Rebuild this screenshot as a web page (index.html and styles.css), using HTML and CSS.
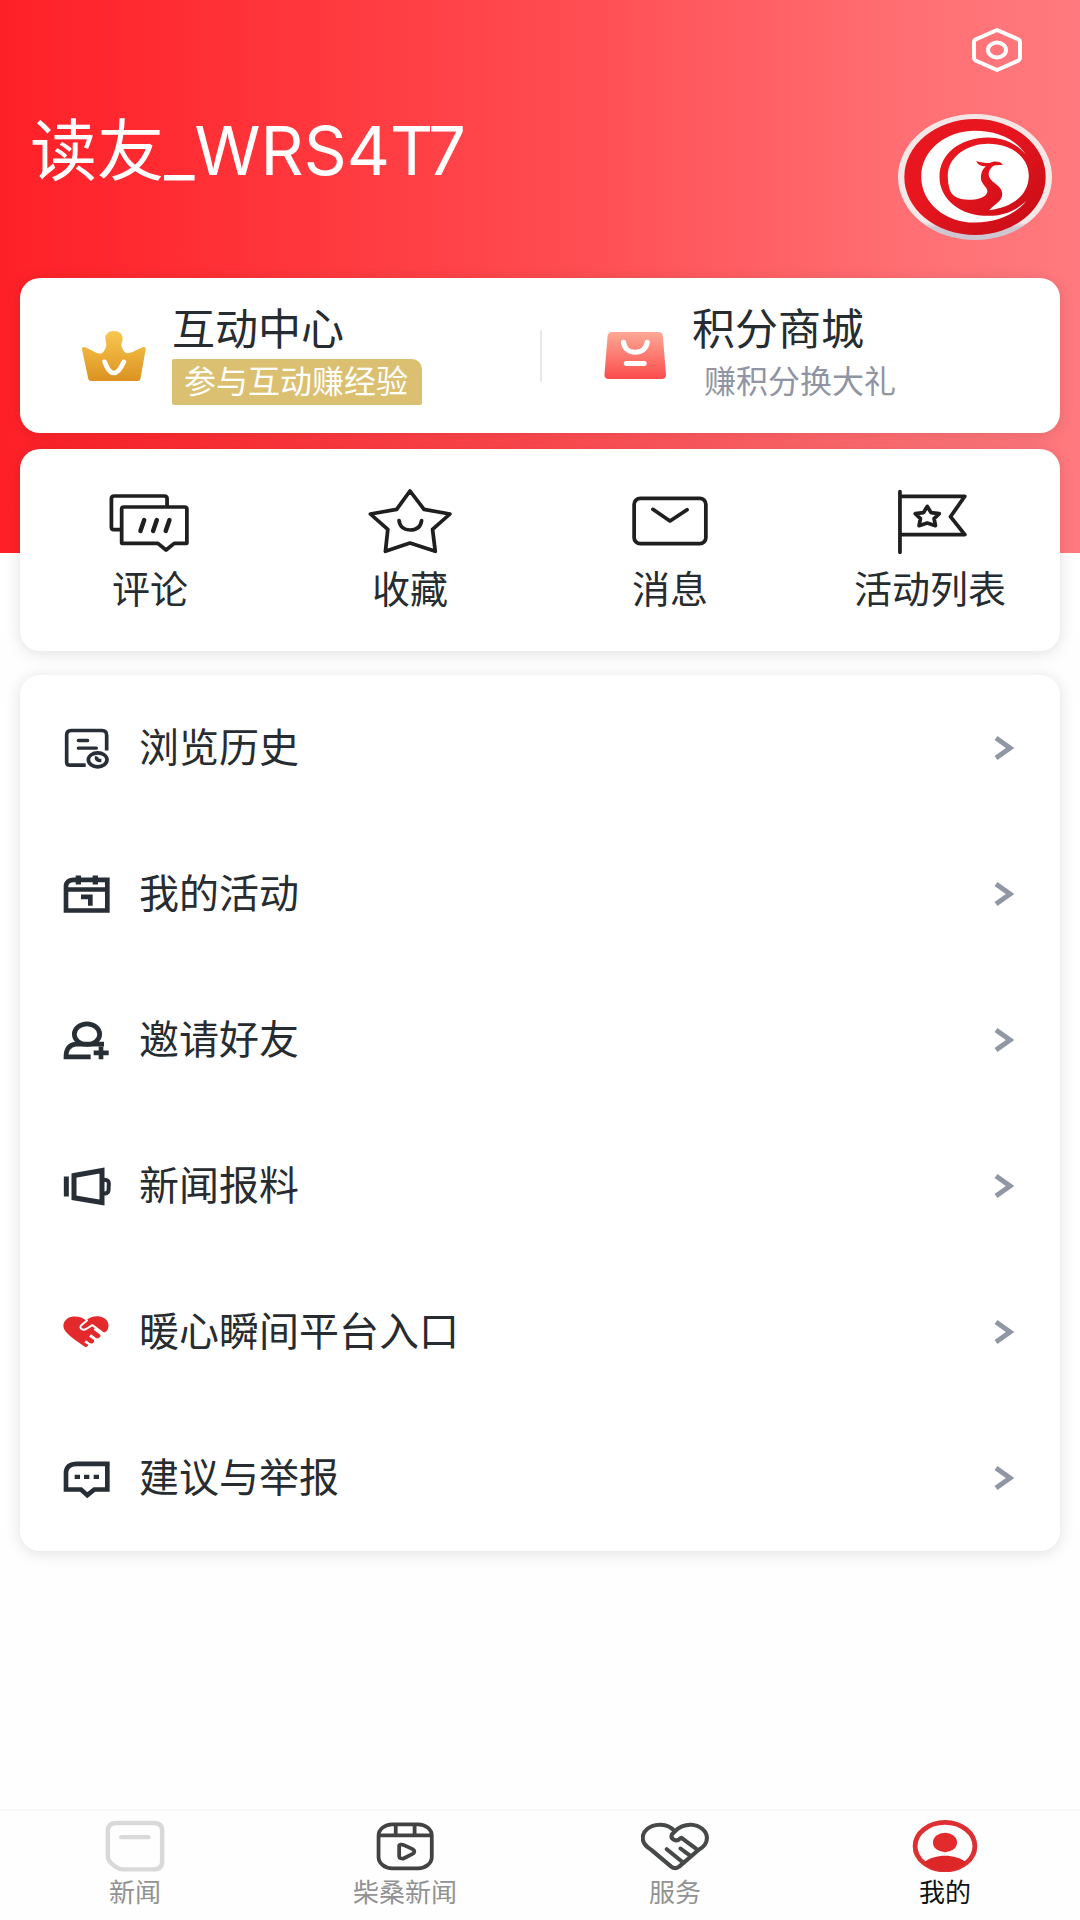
FILE: index.html
```html
<!DOCTYPE html>
<html lang="zh-CN">
<head>
<meta charset="utf-8">
<meta name="viewport" content="width=device-width, initial-scale=1">
<title>我的</title>
<link rel="stylesheet" href="styles.css">
</head>
<body>
<main class="page">
  <header class="top">
    <button class="settings" type="button" aria-label="设置">
      <svg viewBox="0 0 50 44" width="50" height="44" fill="none" stroke="#fff" stroke-width="4" stroke-linejoin="round"><path d="M25 2 46.500 11.500Q48 12.500 48 14V30Q48 31.500 46.500 32.500L25 42 3.500 32.500Q2 31.500 2 30V14Q2 12.500 3.500 11.500Z" /><ellipse cx="25" cy="22" rx="9" ry="7.500"/></svg>
    </button>
    <div class="profile">
      <h1 class="name">读友_WRS4T7</h1>
      <svg class="avatar" viewBox="113 341 464 376" preserveAspectRatio="none" role="img" aria-label="头像">
        <defs>
          <linearGradient id="rim" x1="0" y1="0" x2="0" y2="1"><stop offset="0" stop-color="#f4e6e4"/><stop offset=".86" stop-color="#f3e9e9"/><stop offset=".9" stop-color="#cfc6d2"/><stop offset="1" stop-color="#cdc5d0"/></linearGradient>
          <linearGradient id="disc" x1="0" y1="0" x2="1" y2="1"><stop offset=".4" stop-color="#e8161f"/><stop offset="1" stop-color="#c40c16"/></linearGradient>
        </defs>
        <ellipse cx="345" cy="529" rx="232" ry="188" fill="url(#rim)"/>
        <ellipse cx="345" cy="529" rx="213" ry="173" fill="url(#disc)"/>
        <path fill="#fff" d="M497 460C465 415 410 391 345 391C255 391 183 450 183 528C183 606 255 665 345 665C410 665 468 640 500 600C468 630 430 645 385 645C300 645 238 595 238 528C238 460 300 411 385 411C430 411 470 430 497 460Z"/>
        <path fill="#fff" d="M385 430C455 430 507 470 507 525C507 580 460 620 388 628C404 610 427 602 427 580C427 555 398 550 388 530C383 515 388 506 400 496C410 492 425 495 429 491C415 480 400 482 390 487C375 487 360 485 349 481C352 492 362 496 378 497C364 508 361 525 364 540C370 555 385 562 382 575C375 592 350 597 325 597C300 597 285 590 276 580C266 565 263 545 263 525C263 470 320 430 385 430Z"/>
      </svg>
    </div>
  </header>

  <section class="card promos">
    <a class="promo" href="#">
      <svg class="promo-icon" viewBox="238 206 184 151" preserveAspectRatio="none">
        <defs><linearGradient id="gold" x1="0" y1="0" x2="0" y2="1"><stop offset="0" stop-color="#f8c850"/><stop offset="1" stop-color="#dc9220"/></linearGradient></defs>
        <path fill="url(#gold)" d="M330 206C346 206 355 216 355 228C355 236 352 241 351 247C352 258 359 272 367 273C380 274 396 262 412 255Q422 252 421 262L406 350Q405 357 398 357H264Q257 357 256 350L238 262Q237 252 248 255C264 262 282 276 293 274C302 271 307 256 308 247C308 241 305 236 305 228C305 216 314 206 330 206Z"/>
        <path d="M303 299Q315 333 329 333Q344 333 358 299" fill="none" stroke="#fff" stroke-width="14" stroke-linecap="round"/>
      </svg>
      <span class="promo-text"><span class="promo-title">互动中心</span><span class="promo-sub badge">参与互动赚经验</span></span>
    </a>
    <a class="promo" href="#">
      <svg class="promo-icon" viewBox="182 210 184 151" preserveAspectRatio="none">
        <defs><linearGradient id="coral" x1="0" y1="0" x2="0" y2="1"><stop offset="0" stop-color="#fca995"/><stop offset="1" stop-color="#fc4b4c"/></linearGradient></defs>
        <path fill="url(#coral)" d="M212 213H343Q356 213 357 226L366 342Q366 355 353 355H202Q189 355 189 342L198 226Q199 213 212 213Z"/>
        <path d="M244 244C246 264 260 274 277 274C295 274 309 264 312 244M252 308H303" fill="none" stroke="#fff" stroke-width="15" stroke-linecap="round"/>
      </svg>
      <span class="promo-text"><span class="promo-title">积分商城</span><span class="promo-sub">赚积分换大礼</span></span>
    </a>
  </section>

  <nav class="card shortcuts" aria-label="快捷入口">
    <a class="shortcut" href="#">
      <svg class="shortcut-icon" viewBox="313 148 246 195" preserveAspectRatio="none"><path d="M353 270H330Q323 270 323 263V177Q323 169 331 169H478Q486 169 486 177V202M359 202H537Q544 202 544 208V311H507L483 331 459 311H353V208Q353 202 359 202Z"/><path d="M419 241 408 274M456 241 445 274M493 241 482 274" stroke-width="13"/></svg>
      <span>评论</span>
    </a>
    <a class="shortcut" href="#">
      <svg class="shortcut-icon" viewBox="1067 148 246 195" preserveAspectRatio="none"><path d="M1190 154 1231 209 1307 223 1256 269 1264 335 1190 310 1118 335 1125 269 1074 223 1151 209Z"/><path d="M1158 243C1160 262 1173 271 1190 271C1208 271 1221 262 1224 243"/></svg>
      <span>收藏</span>
    </a>
    <a class="shortcut" href="#">
      <svg class="shortcut-icon" viewBox="255 148 246 195" preserveAspectRatio="none"><rect x="273" y="176" width="210" height="136" rx="18"/><path d="M328 209 378 244 428 210"/></svg>
      <span>消息</span>
    </a>
    <a class="shortcut" href="#">
      <svg class="shortcut-icon" viewBox="1010 148 246 195" preserveAspectRatio="none"><path d="M1045 156V338M1045 170H1235L1193 231 1235 285H1045"/><path d="M1125 200 1136 219 1160 222 1145 237 1149 258 1125 250 1101 258 1105 237 1090 222 1114 219Z"/></svg>
      <span>活动列表</span>
    </a>
  </nav>

  <ul class="card menu">
    <li><a class="row" href="#">
      <svg class="row-icon" viewBox="72 84 144 128" fill="none" stroke="#272e35" stroke-width="11"><path d="M140 198H93Q83 198 83 189V107Q83 94 97 94H189Q203 94 203 108V154"/><path d="M118 124H146M118 147H172" stroke-width="10" stroke-linecap="round"/><ellipse cx="176" cy="182" rx="28" ry="21"/><path d="M173 172C171 180 174 184 187 184" stroke-width="11"/></svg>
      <span class="row-label">浏览历史</span>
      <svg class="chevron" viewBox="0 0 20 26"><path d="M2 3 16 13 2 23"/></svg></a></li>
    <li><a class="row" href="#">
      <svg class="row-icon" viewBox="70 521 144 128" fill="none" stroke="#272e35" stroke-width="14"><path d="M79 633V558Q82 541 102 541H203V633ZM79 570H203" /><path d="M116 528V555M167 528V555" stroke-width="16"/><path d="M124 592H152V619" stroke-width="14"/></svg>
      <span class="row-label">我的活动</span>
      <svg class="chevron" viewBox="0 0 20 26"><path d="M2 3 16 13 2 23"/></svg></a></li>
    <li><a class="row" href="#">
      <svg class="row-icon" viewBox="70 957 144 128" fill="none" stroke="#272e35" stroke-width="14"><ellipse cx="142" cy="1002" rx="38" ry="31"/><path d="M193 1032H108Q79 1036 79 1070H153M162 1058H207M184 1040V1077"/></svg>
      <span class="row-label">邀请好友</span>
      <svg class="chevron" viewBox="0 0 20 26"><path d="M2 3 16 13 2 23"/></svg></a></li>
    <li><a class="row" href="#">
      <svg class="row-icon" viewBox="70 74 144 128" fill="none" stroke="#272e35" stroke-width="15"><path d="M80 108V168M103 105 187 90V186L103 172Z"/><path d="M192 118C212 118 207 130 207 140C207 151 208 159 192 159" stroke-width="12"/></svg>
      <span class="row-label">新闻报料</span>
      <svg class="chevron" viewBox="0 0 20 26"><path d="M2 3 16 13 2 23"/></svg></a></li>
    <li><a class="row" href="#">
      <svg class="row-icon" viewBox="68 510 144 128" fill="none"><path fill="#e3292b" d="M137 538C150 526 166 524 178 526C198 529 209 546 203 562C200 572 190 577 184 572L165 559L160 566L178 579Q184 585 176 590Q170 594 164 588L152 579L146 586L160 596Q164 602 157 606Q151 608 146 604L137 597L132 604L144 611Q143 617 136 618Q75 580 70 560C66 544 78 528 98 526C114 525 128 529 137 538Z"/><path stroke="#fff" stroke-width="6" stroke-linecap="round" stroke-linejoin="round" d="M140 538 122 553C116 562 128 570 138 563L156 552 194 580"/></svg>
      <span class="row-label">暖心瞬间平台入口</span>
      <svg class="chevron" viewBox="0 0 20 26"><path d="M2 3 16 13 2 23"/></svg></a></li>
    <li><a class="row" href="#">
      <svg class="row-icon" viewBox="70 950 144 128" fill="none" stroke="#272e35" stroke-width="14"><path d="M79 1047V994Q82 970 112 970H203V1047H164L143 1064 124 1047Z"/><path d="M105 1009H121M133 1009H149M162 1009H178" stroke-width="13"/></svg>
      <span class="row-label">建议与举报</span>
      <svg class="chevron" viewBox="0 0 20 26"><path d="M2 3 16 13 2 23"/></svg></a></li>
  </ul>
</main>

<nav class="tabs" aria-label="主导航">
  <a class="tab" href="#">
    <svg class="tab-icon" viewBox="295 117 198 158" preserveAspectRatio="none" fill="none" stroke="#d9d9d9" stroke-width="13"><path d="M342 129H447Q473 129 473 151V245Q473 267 447 267H358C342 267 315 244 315 230V151Q315 129 342 129Z"/><path d="M354 171H433" stroke-linecap="round"/></svg>
    <span>新闻</span>
  </a>
  <a class="tab" href="#">
    <svg class="tab-icon" viewBox="1078 117 198 158" preserveAspectRatio="none" fill="none" stroke="#424242" stroke-width="11" stroke-linejoin="round"><rect x="1100" y="133" width="155" height="131" rx="40" ry="34"/><path d="M1101 166H1254M1150 134V165M1205 134V165"/><path d="M1160 198C1160 193 1168 192 1174 195L1199 207C1206 211 1206 217 1199 221L1174 234C1168 237 1160 234 1160 228Z"/></svg>
    <span>柴桑新闻</span>
  </a>
  <a class="tab" href="#">
    <svg class="tab-icon" viewBox="294 117 198 158" preserveAspectRatio="none" fill="none" stroke="#474949" stroke-width="12" stroke-linecap="round" stroke-linejoin="round"><path d="M393 154C380 138 362 133 347 134C320 135 299 152 299 174C299 190 310 200 324 209L382 259Q393 268 405 259L462 209C477 199 486 191 486 174C486 152 464 135 440 134C423 133 402 142 393 154L384 163C379 177 397 188 409 174L412 173 456 207M409 205 434 224M369 207 412 243"/></svg>
    <span>服务</span>
  </a>
  <a class="tab current" href="#" aria-current="page">
    <svg class="tab-icon" viewBox="1079 117 198 158" preserveAspectRatio="none"><ellipse cx="1178" cy="198" rx="87" ry="71" fill="none" stroke="#de3032" stroke-width="14"/><ellipse cx="1178" cy="187" rx="35" ry="29" fill="#e12b2c"/><path d="M1117 246C1148 220 1208 220 1240 246C1210 280 1148 282 1117 246Z" fill="#dc2627"/></svg>
    <span>我的</span>
  </a>
</nav>
</body>
</html>
```
FILE: styles.css
```css
* {
  box-sizing: border-box;
}

body {
  margin: 0;
  min-height: 100vh;
  display: flex;
  flex-direction: column;
  background: #fefefe;
  color: #272c30;
  font-family: Inter, "Noto Sans CJK SC", sans-serif;
}

a {
  color: inherit;
  text-decoration: none;
}

svg {
  display: block;
  flex: none;
}

.page {
  flex: 1;
  padding: 28px 20px;
  background: linear-gradient(90deg, #ff2027 0%, #ff2b31 14%, #ff4a4f 50%, #ff6f73 84%, #ff7a7e 100%) no-repeat top / 100% 553px;
}

.top {
  display: flex;
  flex-direction: column;
  gap: 42px;
  padding: 0 8px 0 10px;
}

.settings {
  align-self: flex-end;
  margin-right: 30px;
  padding: 0;
  border: 0;
  background: none;
  cursor: pointer;
}

.profile {
  display: flex;
  justify-content: space-between;
  align-items: flex-start;
}

.name {
  margin: 0;
  color: #fff;
  font-size: 67px;
  line-height: 74px;
  font-weight: 400;
}

.avatar {
  width: 154px;
  height: 126px;
}

.card {
  border-radius: 20px;
  background: #fff;
  box-shadow: 0 2px 16px rgba(0, 0, 0, 0.12);
}

.promos {
  display: grid;
  grid-template-columns: 1fr 1fr;
  margin-top: 38px;
}

.promo {
  display: flex;
  align-items: center;
  gap: 26px;
  height: 155px;
  padding-left: 62px;
}

.promo + .promo {
  background: linear-gradient(#e9e9ec, #e9e9ec) no-repeat left center / 2px 52px;
}

.promo-icon {
  width: 64px;
  height: 50px;
}

.promo-text {
  display: flex;
  flex-direction: column;
  align-items: flex-start;
  gap: 4px;
  padding-bottom: 4px;
}

.promo-title {
  font-size: 43px;
  line-height: 52px;
}

.promo-sub {
  padding: 0 14px 0 12px;
  color: #9094a3;
  font-size: 32px;
  line-height: 46px;
}

.badge {
  border-radius: 2px 10px 2px 2px;
  background: #dbc071;
  color: #fff;
}

.shortcuts {
  display: grid;
  grid-template-columns: repeat(4, 1fr);
  margin-top: 16px;
}

.shortcut {
  display: flex;
  flex-direction: column;
  align-items: center;
  gap: 10px;
  height: 202px;
  padding-top: 40px;
  font-size: 38px;
  line-height: 50px;
}

.shortcut-icon {
  width: 84px;
  height: 65px;
  fill: none;
  stroke: #1f1f1f;
  stroke-width: 11;
  stroke-linecap: round;
  stroke-linejoin: round;
}

.menu {
  margin: 24px 0 0;
  padding: 0;
  list-style: none;
}

.row {
  display: flex;
  align-items: center;
  height: 146px;
  padding: 0 46px 0 43px;
}

.row-icon {
  width: 48px;
  height: 43px;
}

.row-label {
  flex: 1;
  padding-left: 28px;
  font-size: 40px;
  line-height: 52px;
}

.chevron {
  width: 20px;
  height: 26px;
  fill: none;
  stroke: #9297a5;
  stroke-width: 5;
}

.tabs {
  display: grid;
  grid-template-columns: repeat(4, 1fr);
  border-top: 2px solid #f6f6f6;
  background: #fefefe;
}

.tab {
  display: flex;
  flex-direction: column;
  align-items: center;
  gap: 4px;
  padding: 8px 0 10px;
  color: #929292;
  font-size: 26px;
  line-height: 34px;
}

.tab-icon {
  width: 68px;
  height: 53px;
}

.current {
  color: #111;
}
```
